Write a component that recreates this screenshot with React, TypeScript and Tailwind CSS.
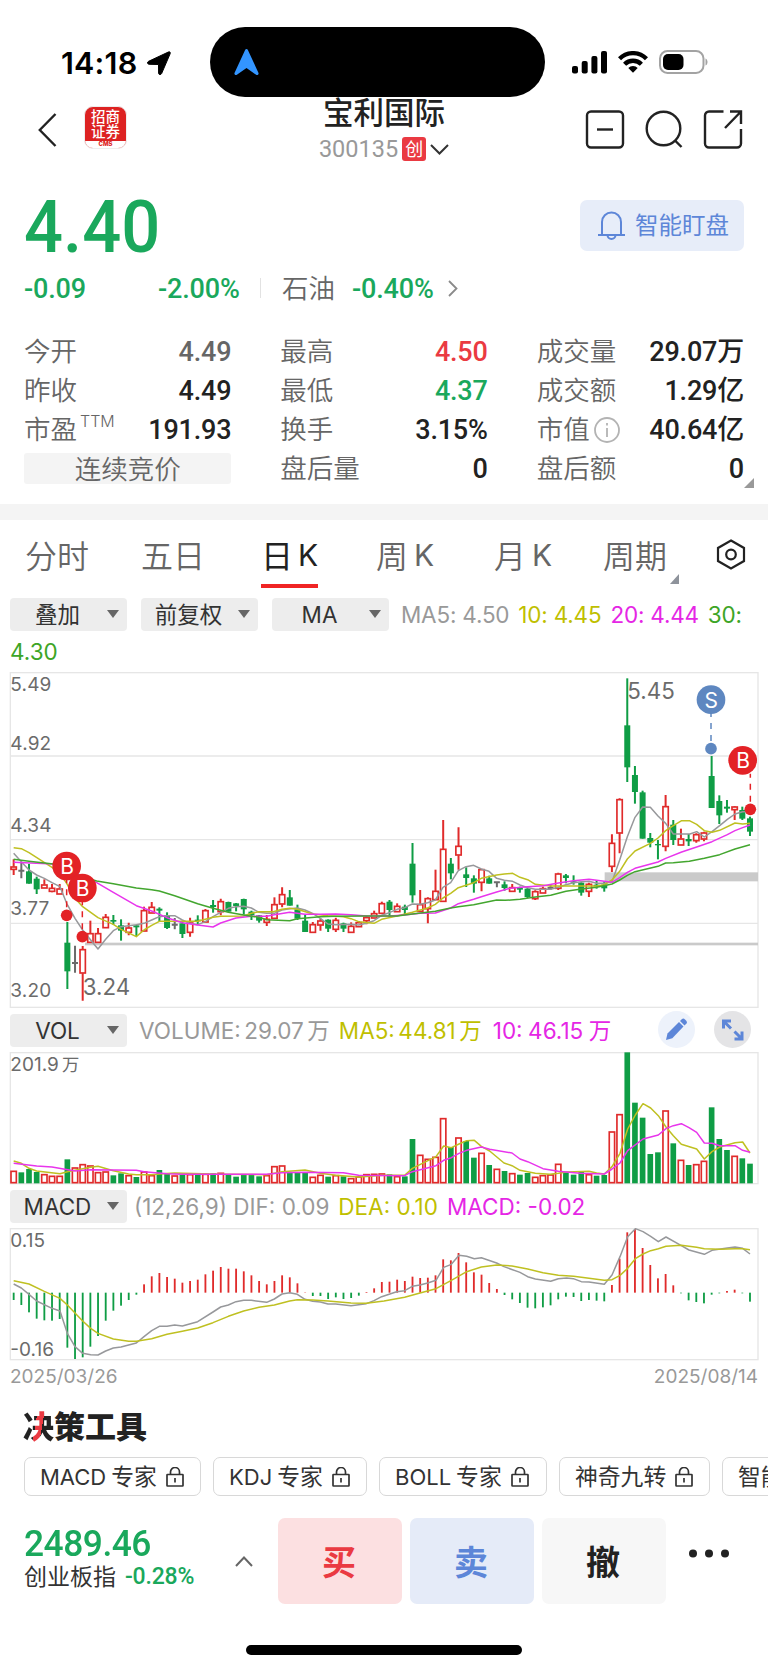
import React from "react";

const NUM = "font-['Roboto','Noto_Sans_CJK_SC',sans-serif]";
const UI = "font-['Inter','Noto_Sans_CJK_SC',sans-serif]";

type Kind = "r" | "g" | "n";

const RED = "#e02b2b";
const GREEN = "#0f9d45";
const GRAY = "#6b6b6b";

const X0 = 41;
const STEP = 23.01;
const xAt = (i: number) => X0 + STEP * i;

// kind high top bottom low
const CANDLES = `r 598 620 629 645|n 605 631 633 655|g 612 634 671 671|g 650 656 688 702|r 658 674 685 685|r 672 684 695 697|r 672 686 703 703|g 786 848 934 987|n 857 908 910 938|r 858 868 940 1022|r 782 820 848 848|r 804 820 848 848|r 762 771 804 804|g 765 780 785 794|g 778 796 812 842|r 788 803 818 826|g 794 796 802 828|r 740 751 814 814|r 726 741 760 760|g 742 746 752 784|g 757 766 804 807|n 774 793 796 808|g 786 790 822 834|r 773 788 818 830|g 766 779 784 795|r 747 751 787 787|g 720 735 741 758|r 716 724 756 766|g 725 726 755 755|g 729 730 738 754|g 716 717 748 764|g 752 755 765 780|g 765 766 782 788|r 765 777 788 798|r 712 733 776 776|r 682 703 733 742|g 690 712 737 737|g 734 748 776 780|g 765 782 816 816|r 786 793 818 818|r 776 782 796 812|g 778 779 806 816|r 773 780 809 816|g 788 790 806 816|r 787 798 818 818|r 783 787 801 801|r 768 772 783 793|r 752 760 775 775|r 725 730 761 761|g 720 725 750 772|r 730 738 756 756|g 734 740 750 762|g 549 611 706 728|r 690 733 755 755|r 712 715 747 790|r 629 693 720 720|r 480 567 725 725|g 594 611 640 658|r 502 558 586 629|g 622 643 654 681|g 646 655 671 698|r 627 628 668 694|g 647 655 671 671|n 664 666 668 682|g 664 673 684 692|r 672 682 695 695|g 680 684 689 698|g 683 686 711 714|r 691 694 717 720|r 680 685 700 700|n 675 683 685 690|r 638 641 686 690|g 642 646 654 670|g 646 664 668 674|g 667 668 698 707|r 668 672 695 711|g 660 674 679 686|g 664 674 685 695|r 523 549 620 636|r 415 418 520 580|g 55 196 322 366|g 318 345 396 431|g 392 397 536 536|g 519 534 548 562|g 540 552 556 598|r 405 439 560 574|g 480 494 540 555|r 506 536 556 556|g 522 537 544 558|r 520 523 543 548|r 515 518 538 544|g 288 348 444 444|g 406 423 466 492|g 420 440 446 458|r 438 440 450 480|g 440 450 476 480|g 470 475 515 528`
  .split("|")
  .map((s) => {
    const [k, ...v] = s.split(" ");
    return { k: k as Kind, v: v.map(Number) };
  });

const MA5 = "41,580 64,605 87,630 110,645 133,655 156,668 180,680 200,730 225,775 248,810 272,840 294,867 317,838 340,812 363,800 386,797 409,794 432,790 455,780 478,770 501,767 524,767 547,780 570,790 593,794 616,785 639,770 662,757 685,745 708,740 731,739 754,744 777,757 800,760 823,760 846,750 869,746 892,744 915,750 938,760 961,775 984,792 1007,794 1053,793 1076,795 1099,790 1122,782 1145,766 1168,758 1191,748 1214,743 1237,732 1260,733 1283,728 1306,720 1329,682 1352,668 1375,632 1398,620 1421,616 1444,627 1467,634 1490,655 1513,661 1538,664 1560,675 1583,683 1606,688 1652,688 1675,682 1698,674 1721,668 1744,665 1767,664 1790,670 1813,670 1836,665 1859,600 1882,530 1905,472 1928,441 1951,442 1974,468 1997,490 2020,522 2070,522 2090,515 2113,531 2136,515 2159,497 2182,478 2205,462 2228,455 2250,455";
const MA10 = "41,563 64,566 87,578 156,622 180,640 200,670 225,715 248,740 294,773 340,793 363,808 409,830 432,810 455,796 478,784 593,784 639,772 662,769 731,768 754,760 777,755 820,755 846,748 869,745 892,748 938,762 984,767 1030,770 1053,776 1076,785 1122,790 1145,778 1191,768 1237,757 1283,744 1306,733 1329,714 1352,700 1375,683 1421,668 1444,655 1490,645 1513,642 1538,640 1560,652 1583,659 1606,673 1652,678 1790,678 1813,674 1836,660 1859,634 1882,597 1905,573 1951,550 1974,534 1997,512 2020,497 2045,482 2068,482 2090,493 2113,512 2136,517 2159,511 2205,489 2228,492 2250,490";
const MA20 = "41,607 160,612 240,645 290,668 340,697 409,737 455,753 501,773 547,788 593,795 639,801 662,789 708,774 754,769 800,769 823,764 869,757 915,763 961,763 1007,762 1053,764 1099,768 1168,768 1214,765 1260,760 1306,759 1352,744 1375,731 1421,718 1444,710 1490,696 1530,685 1583,680 1630,677 1675,669 1721,662 1767,658 1836,667 1859,653 1882,637 1905,625 1974,606 1997,595 2045,576 2090,561 2136,545 2182,524 2205,512 2228,503 2250,495";
const MA30 = "41,598 87,604 160,612 240,648 290,663 340,671 409,684 455,689 478,693 524,707 593,731 639,745 685,757 731,765 777,772 800,779 869,782 892,776 961,770 1007,769 1099,768 1191,768 1237,762 1306,754 1352,744 1375,740 1421,734 1490,720 1515,721 1560,718 1606,711 1652,706 1698,694 1744,687 1790,682 1836,672 1859,660 1882,646 1905,635 1974,619 1997,609 2020,608 2068,604 2113,595 2159,584 2205,567 2250,554";

const VOLUMES = "r498 g502 g492 g501 r508 r513 r513 g463 r488 r478 r482 r502 r500 g511 g505 r511 g516 r500 r511 g495 g507 r512 g508 r508 g509 r507 g505 r504 g509 g515 g508 g508 g514 r511 r484 r482 g502 g502 g503 r516 r510 g515 r511 g514 r520 r515 r508 r507 r506 g508 r514 g514 g402 r450 r462 r456 r340 g426 r398 g408 g458 r444 g480 r492 g498 r505 g509 g504 r516 r511 r509 r477 g502 g509 g501 r508 g512 g510 r380 r328 g142 g293 g338 g447 g442 r317 g415 r465 g480 r478 r468 g307 g402 g435 r453 g460 g476"
  .split(" ")
  .map((s) => ({ k: s[0], y: Number(s.slice(1)) }));
const VMA5 = "41,468 64,475 87,490 110,498 180,506 202,500 225,496 272,487 294,484 340,497 386,507 409,509 455,509 478,507 524,504 662,508 800,509 846,500 915,495 961,505 1007,511 1076,516 1152,511 1214,511 1237,490 1308,455 1331,423 1354,428 1377,417 1400,407 1423,406 1444,424 1469,438 1512,474 1536,482 1560,496 1606,505 1650,508 1675,505 1700,501 1767,499 1790,504 1813,507 1836,485 1860,445 1883,372 1906,330 1929,296 1952,309 1975,332 1998,366 2020,392 2044,418 2090,432 2113,462 2136,440 2159,426 2205,413 2228,411 2250,444";
const VMA10 = "41,475 110,483 156,486 225,498 272,494 409,496 432,500 501,506 547,508 800,508 846,503 915,502 1030,503 1076,511 1214,512 1237,500 1308,482 1331,466 1354,458 1377,445 1400,436 1444,426 1469,433 1536,444 1560,462 1583,470 1629,491 1675,499 1740,505 1813,507 1836,492 1860,474 1883,437 1929,402 1975,390 1998,371 2020,362 2044,356 2067,368 2090,382 2113,414 2136,415 2159,422 2205,422 2228,436 2250,442";

const MACD = [345, 360, 382, 401, 406, 407, 402, 488, 522, 517, 485, 453, 407, 377, 362, 345, 329, 298, 274, 264, 276, 281, 293, 288, 284, 268, 257, 246, 251, 251, 259, 271, 288, 298, 288, 271, 277, 295, 322, 333, 333, 342, 337, 342, 339, 332, 321, 310, 291, 290, 284, 288, 275, 279, 278, 271, 223, 226, 204, 232, 262, 269, 294, 312, 330, 343, 354, 368, 370, 367, 361, 343, 335, 336, 348, 345, 347, 349, 300, 221, 142, 132, 189, 240, 280, 267, 301, 325, 346, 351, 355, 329, 325, 318, 314, 325, 350];
const DIF = "41,297 64,309 87,328 110,348 156,370 180,378 202,445 225,485 248,505 272,509 294,510 317,498 340,489 363,486 409,474 432,455 455,437 478,424 501,424 524,420 547,423 593,410 639,381 662,366 685,360 708,350 731,346 754,346 800,352 823,342 846,327 869,323 892,328 915,343 938,349 961,351 984,357 1007,357 1053,362 1099,356 1122,347 1145,335 1190,320 1214,317 1237,304 1260,300 1283,294 1308,286 1331,247 1354,238 1377,211 1400,214 1423,221 1444,218 1490,234 1512,245 1560,262 1583,275 1606,282 1652,289 1675,281 1700,279 1720,281 1744,290 1767,291 1813,298 1836,270 1860,215 1883,155 1906,131 1929,140 1952,154 1975,170 1998,156 2044,182 2067,195 2113,208 2136,196 2182,189 2205,186 2228,190 2250,207";
const DEA = "41,287 87,297 133,319 180,340 202,360 225,384 248,408 272,430 294,445 340,462 386,469 409,469 455,461 501,448 547,439 593,429 639,413 685,394 731,378 777,367 823,360 869,348 892,344 938,345 984,348 1053,354 1099,355 1152,348 1214,337 1260,324 1308,311 1354,286 1400,260 1444,246 1490,240 1536,243 1583,252 1629,263 1675,271 1721,274 1767,280 1813,286 1836,284 1860,271 1883,250 1906,221 1929,207 1952,197 1975,191 1998,184 2044,181 2090,187 2113,191 2159,193 2205,191 2228,191 2250,194";

function Line({ points, color }: { points: string; color: string }) {
  return <polyline points={points} fill="none" stroke={color} strokeWidth="4.5" strokeLinejoin="round" />;
}

function Marker({ x, y, dotX, dotY, color, label }: { x: number; y: number; dotX: number; dotY: number; color: string; label: string }) {
  return (
    <g>
      <line x1={dotX} x2={dotX} y1={y + 40} y2={dotY - 16} stroke={color} strokeWidth="4.5" strokeDasharray="18 18" strokeDashoffset="6" />
      <circle cx={dotX} cy={dotY} r="17.5" fill={color} />
      <circle cx={x} cy={y} r="43" fill={color} />
      <text x={x + 1} y={y + 24} textAnchor="middle" fontSize="63" fill="#fff">{label}</text>
    </g>
  );
}

function PriceChart() {
  return (
    <svg className={`block h-[336px] w-[768px] ${UI}`} viewBox="0 36 2304 1008">
      <g stroke="#e6e6e6" strokeWidth="4" fill="none">
        <rect x="31" y="38" width="2243" height="1004" />
        <path d="M31 288H2274M31 539H2274M31 790H2274" />
      </g>
      <rect x="1814" y="637" width="460" height="27" fill="#cacaca" />
      <rect x="255" y="848" width="2019" height="8" fill="#cacaca" />
      {CANDLES.map(({ k, v: [hi, top, bot, lo] }, i) => {
        const x = xAt(i);
        if (k === "n")
          return <path key={i} d={`M${x} ${hi}V${lo}M${x - 9} ${(top + bot) / 2}h18`} stroke={GRAY} strokeWidth="6" />;
        if (k === "g")
          return (
            <g key={i} fill={GREEN}>
              <rect x={x - 3} y={hi} width="6" height={lo - hi} />
              <rect x={x - 9} y={top} width="18" height={bot - top} />
            </g>
          );
        return (
          <g key={i} stroke={RED} fill="none">
            <path d={`M${x} ${hi}V${top}M${x} ${bot}V${lo}`} strokeWidth="6" />
            <rect x={x - 8} y={top + 1} width="16" height={Math.max(bot - top - 2, 3)} strokeWidth="5" />
          </g>
        );
      })}
      <Line points={MA5} color="#97989b" />
      <Line points={MA10} color="#bfc021" />
      <Line points={MA20} color="#e835ec" />
      <Line points={MA30} color="#43a62f" />
      <Marker x={200} y={618} dotX={200} dotY={766} color="#e32226" label="B" />
      <Marker x={247} y={684} dotX={247} dotY={830} color="#e32226" label="B" />
      <Marker x={2133} y={119} dotX={2133} dotY={266} color="#5e87c0" label="S" />
      <Marker x={2228} y={301} dotX={2251} dotY={448} color="#e32226" label="B" />
      <g fill="#6b6b6b" fontSize="57" letterSpacing="0.5">
        <text x="31" y="92">5.49</text>
        <text x="31" y="269">4.92</text>
        <text x="31" y="516">4.34</text>
        <text x="31" y="765">3.77</text>
        <text x="31" y="1011">3.20</text>
      </g>
      <g fill="#6b6b6b" fontSize="67">
        <text x="248" y="1005">3.24</text>
        <text x="1882" y="118">5.45</text>
      </g>
    </svg>
  );
}

function VolumeChart() {
  return (
    <svg className={`block h-[133px] w-[768px] ${UI}`} viewBox="0 141 2304 399">
      <rect x="31" y="143" width="2243" height="393" fill="none" stroke="#e6e6e6" strokeWidth="4" />
      {VOLUMES.map(({ k, y }, i) => {
        const x = xAt(i);
        return k === "g" ? (
          <rect key={i} x={x - 8.5} y={y} width="17" height={535 - y} fill={GREEN} />
        ) : (
          <rect key={i} x={x - 8} y={y + 1} width="16" height={532 - y} fill="none" stroke={RED} strokeWidth="5" />
        );
      })}
      <Line points={VMA5} color="#bfc021" />
      <Line points={VMA10} color="#e835ec" />
      <text x="31" y="198" fontSize="57" fill="#6b6b6b">201.9<tspan dx="10" fontSize="52">万</tspan></text>
    </svg>
  );
}

function MacdChart() {
  return (
    <svg className={`block h-[133px] w-[768px] ${UI}`} viewBox="0 129 2304 399">
      <rect x="31" y="131" width="2243" height="393" fill="none" stroke="#e6e6e6" strokeWidth="4" />
      {MACD.map((y, i) => (
        <rect key={i} x={xAt(i) - 2.75} y={Math.min(y, 323)} width="5.5" height={Math.abs(y - 323)} fill={y < 323 ? RED : GREEN} />
      ))}
      <Line points={DIF} color="#97989b" />
      <Line points={DEA} color="#bfc021" />
      <g fill="#6b6b6b" fontSize="57">
        <text x="31" y="187">0.15</text>
        <text x="31" y="512">-0.16</text>
      </g>
    </svg>
  );
}

function StatusBar() {
  return (
    <div className="flex h-[97px] items-start pt-[27px]">
      <div className="flex h-[70px] w-[210px] items-center pl-[61px] pt-px">
        <span className="w-[86px] whitespace-nowrap font-['Inter'] text-[30.500px] font-semibold tracking-[0.200px] text-black">14:18</span>
        <svg className="h-[24px] w-[24px]" viewBox="0 0 24 24"><path d="M23.200 2.600 14.600 22.600c-.8 1.600-2.900 1.300-3-.5L11.500 13.500 2.100 13.300c-1.900-.2-2.100-2.300-.5-3L21.400 1c1.300-.6 2.300.4 1.800 1.600Z" fill="#000" stroke="#000" /></svg>
      </div>
      <div className="flex h-[70px] w-[335px] items-center rounded-[35px] bg-black pl-[24px]">
        <svg className="h-[27px] w-[25px]" viewBox="0 0 25 27"><path d="M11 1.200c.6-1.600 2.400-1.600 3 0L24.500 24c.4 1.700-1 2.600-2.400 1.800L12.500 19 2.900 25.800C1.500 26.600.1 25.700.5 24Z" fill="#3395ff" /></svg>
      </div>
      <div className="flex h-[70px] flex-1 items-center gap-[11px] pl-[27px]">
        <svg className="h-[23px] w-[35px]" viewBox="0 0 35 23"><rect x="0" y="15" width="6" height="7.500" rx="2" /><rect x="9.700" y="10" width="6" height="12.500" rx="2" /><rect x="19.400" y="5" width="6" height="17.500" rx="2" /><rect x="29" y="0" width="6" height="22.500" rx="2" /></svg>
        <svg className="h-[22px] w-[30px]" viewBox="0 0 30 22"><g fill="none" stroke="#000" strokeWidth="4.400"><path d="M1.500 7.800a19 19 0 0 1 27 0" /><path d="M6.600 13.200a11.900 11.900 0 0 1 16.800 0" /></g><path d="M15 21.800 10.300 17a6.600 6.600 0 0 1 9.400 0Z" /></svg>
        <svg className="h-[24px] w-[49px]" viewBox="0 0 49 24"><rect x="1" y="1" width="43.500" height="22" rx="7.500" fill="none" stroke="#a3a3a3" strokeWidth="2" /><rect x="4" y="4" width="20.500" height="16" rx="5" /><path d="M46.500 8.500c2.700 1 2.700 6 0 7Z" fill="#a3a3a3" /></svg>
      </div>
    </div>
  );
}

function Header() {
  return (
    <div className="flex h-[73px] text-[#222]">
      <div className="flex w-[300px] items-start pl-[38px] pt-[9px]">
        <svg className="mt-[7px] h-[34px] w-[19px]" viewBox="0 0 19 34" fill="none" stroke="#222" strokeWidth="2.400"><path d="M17.500 1 1.800 17l15.700 16" /></svg>
        <div className="ml-[27px] flex h-[43px] w-[43px] flex-col items-center overflow-hidden rounded-[9px] border border-[#eee] bg-[#dd2222] font-['Noto_Sans_CJK_SC',sans-serif] text-[14.500px] font-medium leading-[15px] text-white">
          <span className="mt-px">招商</span>
          <span>证券</span>
          <span className="mt-[3px] h-[7px] w-full bg-white text-center font-['Inter'] text-[6px] font-extrabold leading-[6px] text-[#dd2222]">CMS</span>
        </div>
      </div>
      <div className="flex w-[168px] flex-col items-center">
        <span className="font-['Noto_Sans_CJK_SC',sans-serif] text-[30.500px] font-medium leading-[28px]">宝利国际</span>
        <div className="mt-[10px] flex h-[28px] items-center">
          <span className="font-['Roboto'] text-[23.500px] leading-[28px] text-[#999]">300135</span>
          <span className="ml-[4px] flex h-[24px] w-[24px] items-center justify-center rounded-[3px] bg-[#ea3a42] pb-[2px] font-['Noto_Sans_CJK_SC',sans-serif] text-[18px] leading-none text-white">创</span>
          <svg className="ml-[4px] h-[11px] w-[19px]" viewBox="0 0 19 11" fill="none" stroke="#333" strokeWidth="2"><path d="m1 1 8.500 8.500L18 1" /></svg>
        </div>
      </div>
      <div className="flex flex-1 items-start gap-[20px] pl-[117px] pt-[13px]">
        <svg className="h-[39px] w-[40px]" viewBox="0 0 40 39" fill="none" stroke="#222" strokeWidth="2.400"><rect x="2" y="1.500" width="36" height="36" rx="4" /><path d="M12 19.500h16" /></svg>
        <svg className="h-[39px] w-[38px]" viewBox="0 0 38 39" fill="none" stroke="#222" strokeWidth="2.400"><circle cx="18.500" cy="18.500" r="16.800" /><path d="m30 30.500 6.500 6.500" /></svg>
        <svg className="h-[39px] w-[40px]" viewBox="0 0 40 39" fill="none" stroke="#222" strokeWidth="2.400"><path d="M20.500 1.500H6a4 4 0 0 0-4 4v28a4 4 0 0 0 4 4h28a4 4 0 0 0 4-4V19M27 1.500h11V14M38 1.500 22 18" /></svg>
      </div>
    </div>
  );
}

const LABEL = "font-['Noto_Sans_CJK_SC',sans-serif] text-[26.500px] font-[350] text-[#666]";

function Stat({ label, value, tone, children }: { label?: string; value: string; tone?: string; children?: React.ReactNode }) {
  return (
    <div className="flex h-[39px] items-center justify-between">
      <span className={`flex items-center pb-[3px] ${LABEL}`}>{label}{children}</span>
      <span className={`${NUM} pt-px text-[27px] font-medium tracking-[-0.200px] ${tone ?? "text-[#222]"}`}>{value}</span>
    </div>
  );
}

function Quote() {
  return (
    <div className="relative h-[334px]">
      <div className="flex h-[98px] items-start justify-between px-[24px] pt-[31px]">
        <span className="origin-left scale-x-[0.94] font-['Roboto'] text-[73px] font-medium leading-[52px] tracking-[0.100px] text-[#1aa85c]">4.40</span>
        <div className="-mt-px flex h-[51px] w-[164px] items-center rounded-[7px] bg-[#e7edf9] pl-[18px] text-[#5d86d8]">
          <svg className="h-[30px] w-[27px]" viewBox="0 0 27 30" fill="none" stroke="#5d86d8" strokeWidth="2"><path d="M0 24h27M4 24V11a9.500 9.500 0 0 1 19 0v13M9.500 24a4 4 0 0 0 8 0" /></svg>
          <span className="ml-[10px] pb-[3px] font-['Noto_Sans_CJK_SC',sans-serif] text-[23.500px] leading-[30px]">智能盯盘</span>
        </div>
      </div>
      <div className={`flex h-[40px] items-center px-[24px] text-[27px] font-medium tracking-[-0.150px] text-[#1aa85c] ${NUM}`}>
        <span className="w-[134px] pt-[2px]">-0.09</span>
        <span className="w-[82px] whitespace-nowrap pt-[2px]">-2.00%</span>
        <span className="ml-[20px] h-[20px] w-px bg-[#e2e2e2]" />
        <span className={`ml-[21px] w-[70px] pb-[2px] ${LABEL} tracking-normal`}>石油</span>
        <span className="w-[82px] whitespace-nowrap pt-[2px]">-0.40%</span>
        <svg className="ml-[14px] h-[17px] w-[10px]" viewBox="0 0 10 17" fill="none" stroke="#8a8a8a" strokeWidth="1.800"><path d="m1 1 7.500 7.500L1 16" /></svg>
      </div>
      <div className="grid grid-cols-3 gap-x-[49px] px-[24px] pt-[24px]">
        <Stat label="今开" value="4.49" tone="text-[#666]" />
        <Stat label="最高" value="4.50" tone="text-[#ea3a42]" />
        <Stat label="成交量" value="29.07万" />
        <Stat label="昨收" value="4.49" />
        <Stat label="最低" value="4.37" tone="text-[#1aa85c]" />
        <Stat label="成交额" value="1.29亿" />
        <Stat label="市盈" value="191.93">
          <span className="mb-[14px] ml-[3px] font-['Inter'] text-[16px] leading-none">TTM</span>
        </Stat>
        <Stat label="换手" value="3.15%" />
        <Stat label="市值" value="40.64亿">
          <svg className="ml-[4px] mt-[3px] h-[26px] w-[26px]" viewBox="0 0 26 26" fill="none" stroke="#b3b3b3" strokeWidth="1.800"><circle cx="13" cy="13" r="12" /><path d="M13 11v9M13 6v2.500" /></svg>
        </Stat>
        <div className="flex h-[39px] items-center">
          <span className={`flex h-[31px] w-full items-center justify-center rounded-[3px] bg-[#f4f4f4] pb-[2px] ${LABEL} leading-[28px]`}>连续竞价</span>
        </div>
        <Stat label="盘后量" value="0" />
        <Stat label="盘后额" value="0" />
      </div>
      <svg className="absolute right-[14px] top-[308px] h-[10px] w-[10px]" viewBox="0 0 10 10"><path d="M10 0v10H0Z" fill="#999" /></svg>
    </div>
  );
}

function Tabs() {
  const base = "flex h-[67px] items-center whitespace-nowrap font-['Noto_Sans_CJK_SC',sans-serif] text-[32px]";
  const idle = "font-[350] text-[#666]";
  const letter = "pt-[3px] font-['Inter'] text-[30px] font-normal";
  return (
    <div className="flex h-[78px] pl-[25px]">
      <span className={`${base} ${idle} w-[116px]`}>分时</span>
      <span className={`${base} ${idle} w-[120px]`}>五日</span>
      <div className="relative w-[115px]">
        <span className={`${base} gap-[5px] text-[#222]`}>日<span className={letter}>K</span></span>
        <span className="absolute left-0 top-[64px] h-[4px] w-[57px] bg-[#f02424]" />
      </div>
      <span className={`${base} ${idle} w-[118px] gap-[6px]`}>周<span className={letter}>K</span></span>
      <span className={`${base} ${idle} w-[109px] gap-[6px]`}>月<span className={letter}>K</span></span>
      <div className="relative w-[113px]">
        <span className={`${base} ${idle}`}>周期</span>
        <svg className="absolute left-[67px] top-[54px] h-[10px] w-[9px]" viewBox="0 0 9 10"><path d="M9 0v10H0Z" fill="#8e939b" /></svg>
      </div>
      <svg className="mt-[19px] h-[31px] w-[30px]" viewBox="0 0 30 31" fill="none" stroke="#222" strokeWidth="2.200"><path d="m15 1.500 13 7.500v13l-13 7.500L2 22V9Z" /><circle cx="15" cy="15.500" r="4.800" /></svg>
    </div>
  );
}

function Select({ children }: { children: React.ReactNode }) {
  return (
    <span className={`relative flex h-[33px] w-[117px] shrink-0 items-center justify-center rounded-[4px] bg-[#ededed] pr-[22px] text-[22.500px] leading-[33px] text-[#333] ${UI}`}>
      {children}
      <svg className="absolute right-[8px] top-[12px] h-[8px] w-[12px]" viewBox="0 0 12 8"><path d="M0 0h12L6 8Z" fill="#666" /></svg>
    </span>
  );
}

function Legend({ color, children }: { color: string; children: React.ReactNode }) {
  return <span className={`whitespace-pre text-[22.500px] leading-[33px] ${color} ${UI}`}>{children}</span>;
}

function Lock() {
  return (
    <svg className="ml-[9px] h-[20px] w-[18px]" viewBox="0 0 18 20" fill="none" stroke="#333" strokeWidth="1.700"><rect x="1" y="7.500" width="16" height="11.500" rx="0.500" /><path d="M4.500 7.500V5a4.500 4.500 0 0 1 9 0v2.500M9 11v4.500" /></svg>
  );
}

function Chip({ en, cn, width }: { en?: string; cn: string; width: string }) {
  return (
    <div className={`flex h-[39px] shrink-0 items-center whitespace-nowrap rounded-[7px] border border-[#d8d8d8] pl-[15px] text-[22px] leading-[36px] text-[#333] ${width} ${UI}`}>
      {en && <span className="mr-[5px]">{en}</span>}
      <span className="pb-px font-['Noto_Sans_CJK_SC',sans-serif] text-[22.800px]">{cn}</span>
      <Lock />
    </div>
  );
}

export default function App() {
  return (
    <div className="h-[1670px] w-[768px] overflow-hidden bg-white">
      <StatusBar />
      <Header />
      <Quote />
      <div className="h-[16px] bg-[#f4f4f4]" />
      <Tabs />
      <div className="flex h-[33px] pl-[10px]">
        <div className="flex gap-[14px]">
          <Select>叠加</Select>
          <Select>前复权</Select>
          <Select>MA</Select>
        </div>
        <div className="ml-[12px] flex gap-[9px] tracking-[-0.200px]">
          <Legend color="text-[#999]">MA5: 4.50</Legend>
          <Legend color="text-[#bfbf00]">10: 4.45</Legend>
          <Legend color="text-[#e526e5]">20: 4.44</Legend>
          <Legend color="text-[#3da526]">30:</Legend>
        </div>
      </div>
      <div className="flex h-[41px] items-start pl-[10px] pt-[4px]">
        <Legend color="text-[#3da526]">4.30</Legend>
      </div>
      <PriceChart />
      <div className="flex h-[44px] pl-[10px] pt-[6px]">
        <Select>VOL</Select>
        <div className="ml-[12px] flex w-[519px] gap-[9px] [word-spacing:-2.800px]">
          <Legend color="text-[#999]">VOLUME: 29.07 万</Legend>
          <Legend color="text-[#bfbf00]">MA5: 44.81 万</Legend>
          <span className="pl-[2px] [word-spacing:-0.800px]">
            <Legend color="text-[#e526e5]">10: 46.15 万</Legend>
          </span>
        </div>
        <div className="-mt-[3px] flex gap-[19px]">
          <svg className="h-[37px] w-[37px]" viewBox="0 0 37 37"><circle cx="18.500" cy="18.500" r="18.500" fill="#edf2fb" /><g fill="#5d86d8"><path d="M8 29l1.500-6.500L21 11l4.500 4.500L14.300 27.200Z" /><path d="m22 10 2-2q1.500-1 3 .5l1.500 1.500q1 1.500 0 2.500l-2 2Z" /></g></svg>
          <svg className="h-[37px] w-[37px]" viewBox="0 0 37 37"><circle cx="18.500" cy="18.500" r="18.500" fill="#e4e4e6" /><g fill="none" stroke="#5d86d8" strokeWidth="3"><path d="m9.500 10 7.500 7.500M28 28l-7.500-7.500M9.500 17.500V10H17M28 20.500V28h-7.500" /></g></svg>
        </div>
      </div>
      <VolumeChart />
      <div className="flex h-[43px] pl-[10px] pt-[5px]">
        <Select>MACD</Select>
        <div className="ml-[7px] flex gap-[9px]">
          <Legend color="text-[#999]">(12,26,9) DIF: 0.09</Legend>
          <Legend color="text-[#bfbf00]">DEA: 0.10</Legend>
          <Legend color="text-[#e526e5]">MACD: -0.02</Legend>
        </div>
      </div>
      <MacdChart />
      <div className="flex h-[39px] justify-between px-[10px] pt-px font-['Inter'] text-[19px] leading-[29px] text-[#999]">
        <span>2025/03/26</span>
        <span>2025/08/14</span>
      </div>
      <div className="h-[57px] pl-[23px] pt-[5px] font-['Noto_Sans_CJK_SC',sans-serif] text-[31px] font-black leading-[40px] text-[#222]">
        <span className="bg-[linear-gradient(100deg,#222_42%,#ea3a42_42%,#ea3a42_60%,#222_60%)] bg-clip-text text-transparent">决</span>策工具
      </div>
      <div className="flex h-[61px] gap-[12px] overflow-hidden pl-[24px]">
        <Chip en="MACD" cn="专家" width="w-[177px]" />
        <Chip en="KDJ" cn="专家" width="w-[154px]" />
        <Chip en="BOLL" cn="专家" width="w-[168px]" />
        <Chip cn="神奇九转" width="w-[151px]" />
        <Chip cn="智能" width="w-[152px]" />
      </div>
      <div className="flex h-[127px] pl-[24px]">
        <div className="w-[211px] pt-[8px]">
          <div className="origin-left scale-x-[0.955] font-['Roboto'] text-[37px] font-medium leading-[36px] tracking-[-0.500px] text-[#1aa85c]">2489.46</div>
          <div className="flex h-[30px] items-center whitespace-nowrap">
            <span className="pb-[3px] font-['Noto_Sans_CJK_SC',sans-serif] text-[23px] leading-[27px] text-[#333]">创业板指</span>
            <span className="ml-[9px] font-['Roboto'] text-[23px] font-medium leading-[30px] tracking-[-0.200px] text-[#1aa85c]">-0.28%</span>
          </div>
        </div>
        <svg className="mt-[38px] h-[11px] w-[18px]" viewBox="0 0 18 11" fill="none" stroke="#666" strokeWidth="2"><path d="m1 10 8-8.500 8 8.500" /></svg>
        <div className="ml-[25px] flex gap-[8px] font-['Noto_Sans_CJK_SC',sans-serif] text-[34px] font-bold">
          <span className="flex h-[86px] w-[124px] items-center justify-center rounded-[7px] bg-[#fce0e1] pb-[2px] pr-[2px] text-[#ea3a42]">买</span>
          <span className="flex h-[86px] w-[124px] items-center justify-center rounded-[7px] bg-[#e5ebf8] pb-[2px] pr-[2px] text-[#5d86d8]">卖</span>
          <span className="flex h-[86px] w-[124px] items-center justify-center rounded-[7px] bg-[#f7f7f7] pb-[2px] pr-[2px] text-[#222]">撤</span>
        </div>
        <svg className="ml-[22px] mt-[31px] h-[9px] w-[42px]" viewBox="0 0 42 9" fill="#222"><circle cx="5" cy="4.500" r="4" /><circle cx="21" cy="4.500" r="4" /><circle cx="37" cy="4.500" r="4" /></svg>
      </div>
      <div className="mx-auto h-[10px] w-[276px] rounded-full bg-black" />
    </div>
  );
}
